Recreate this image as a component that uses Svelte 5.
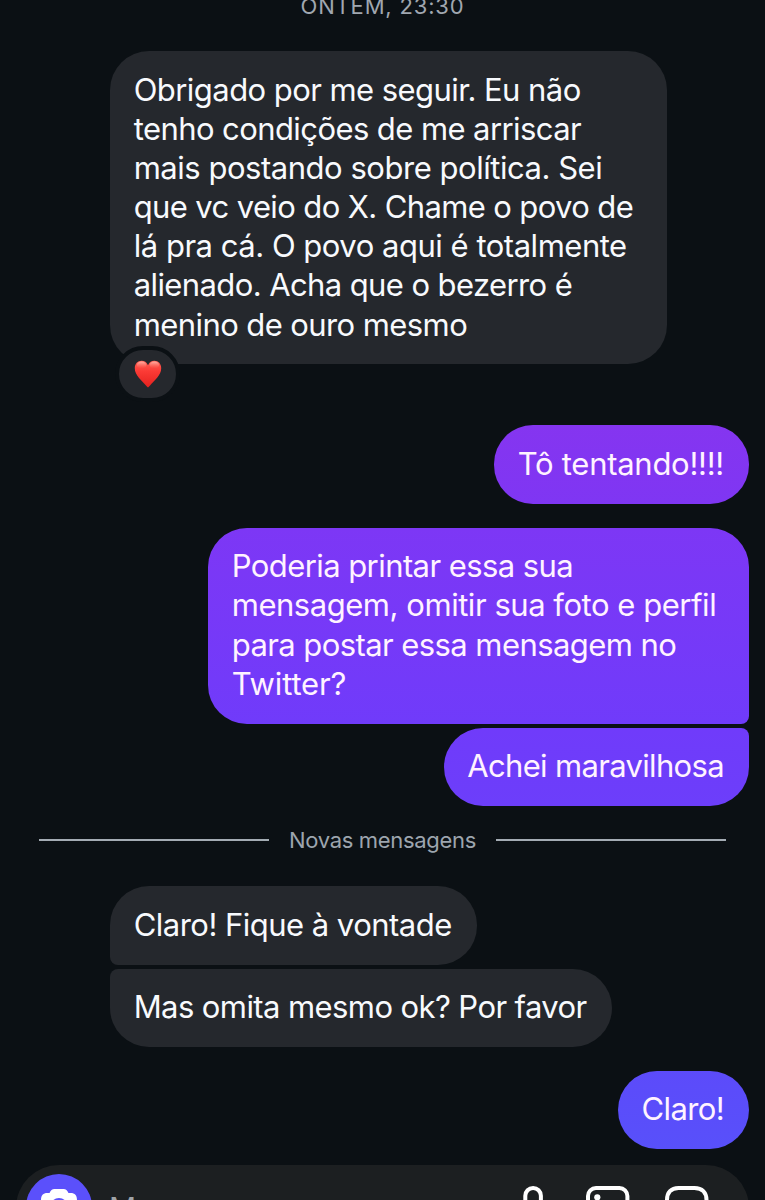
<script>
  const rows = [
    {
      side: 'in', gap: 0, reaction: true,
      lines: [
        ['Obrigado por me seguir. Eu não', 447],
        ['tenho condições de me arriscar', 447.5],
        ['mais postando sobre política. Sei', 468.5],
        ['que vc veio do X. Chame o povo de', 499.5],
        ['lá pra cá. O povo aqui é totalmente', 493],
        ['alienado. Acha que o bezerro é', 438.5],
        ['menino de ouro mesmo', 333.5]
      ]
    },
    { side: 'out', tone: 'violet', gap: 61, lines: [['Tô tentando!!!!', 206.3]] },
    {
      side: 'out', tone: 'purple', join: 'bottom', gap: 24,
      lines: [
        ['Poderia printar essa sua', 341.5],
        ['mensagem, omitir sua foto e perfil', 484.5],
        ['para postar essa mensagem no', 444.5],
        ['Twitter?', 114.5]
      ]
    },
    { side: 'out', tone: 'indigo', join: 'top', gap: 4, lines: [['Achei maravilhosa', 256.8]] },
    { divider: 'Novas mensagens' },
    { side: 'in', join: 'bottom', gap: 0, lines: [['Claro! Fique à vontade', 318]] },
    { side: 'in', join: 'top', gap: 4, lines: [['Mas omita mesmo ok? Por favor', 453]] },
    { side: 'out', tone: 'blue', gap: 24, lines: [['Claro!', 82.5]] }
  ];

  // Spreads the letters of a line so that it takes exactly the given width.
  function track(node, width) {
    const natural = node.getBoundingClientRect().width;
    node.style.letterSpacing = `${(width - natural) / node.textContent.length}px`;
  }
</script>

<main class="chat">
  <div class="date"><span use:track={164}>ONTEM, 23:30</span></div>

  <section class="thread">
    {#each rows as row}
      {#if row.divider}
        <div class="divider"><i></i><span use:track={187}>{row.divider}</span><i></i></div>
      {:else}
        <div class="bubble {row.side} {row.tone ?? ''} {row.join ? 'join-' + row.join : ''}" style="margin-top: {row.gap}px">
          {#each row.lines as [text, width]}
            <div class="line"><span use:track={width}>{text}</span></div>
          {/each}
          {#if row.reaction}
            <div class="reaction">
              <svg width="28" height="28" viewBox="0 0 28 28">
                <defs>
                  <linearGradient id="heart" x1="0" y1="0" x2="0" y2="1">
                    <stop offset="0" stop-color="#ff6256" />
                    <stop offset=".4" stop-color="#fb3a35" />
                    <stop offset="1" stop-color="#e5221f" />
                  </linearGradient>
                  <linearGradient id="shine" x1="0" y1="0" x2="0" y2="1">
                    <stop offset="0" stop-color="#ffc0b4" stop-opacity=".85" />
                    <stop offset="1" stop-color="#ff7468" stop-opacity="0" />
                  </linearGradient>
                </defs>
                <path fill="url(#heart)" d="M14 5.2C12.7 2.2 10.5.8 7.6.8 3.6.8.8 3.9.8 8.2c0 7.3 7 12.2 11.4 17.5.7.9 1.2 1.5 1.8 1.5s1.100-.6 1.800-1.500C20.200 20.400 27.200 15.500 27.200 8.200c0-4.300-2.800-7.400-6.800-7.400-2.900 0-5.100 1.400-6.400 4.400Z" />
                <ellipse cx="7.600" cy="5" rx="4.800" ry="3.500" fill="url(#shine)" />
                <ellipse cx="20.400" cy="5" rx="4.800" ry="3.500" fill="url(#shine)" />
              </svg>
            </div>
          {/if}
        </div>
      {/if}
    {/each}
  </section>

  <footer class="composer">
    <div class="camera">
      <svg width="66" height="66" viewBox="0 0 66 66">
        <path fill="#fff" d="M21.500 19h2c1.300-2.500 2.500-4 5-4h9c2.500 0 3.700 1.500 5 4h2c4.500 0 6.500 2.500 6.500 7v16c0 4.500-2.500 7-7 7H22c-4.500 0-7-2.500-7-7V26c0-4.500 2-7 6.500-7Z" />
        <circle cx="33" cy="33" r="7" fill="none" stroke="#5b50fb" stroke-width="4" />
      </svg>
    </div>
    <span class="placeholder">Mensagem...</span>
    <div class="tools">
      <svg width="40" height="44" viewBox="0 0 40 44">
        <rect x="14.300" y="2" width="15.600" height="25" rx="7.800" />
        <path d="M6.100 20c0 9 7 15 16 15s16-6 16-15M22.100 35v7" />
      </svg>
      <svg width="44" height="44" viewBox="0 0 44 44">
        <rect x="2" y="2" width="39.400" height="39.400" rx="8" />
        <circle class="dot" cx="11.300" cy="11.300" r="3.100" />
        <path d="m3 34 11-10 9 8 8-13 10 12" />
      </svg>
      <svg width="44" height="44" viewBox="0 0 44 44">
        <path d="M13.500 2h16c7.500 0 12 4.500 12 12v13L27 41.500H13.500C6 41.500 2 37 2 29.500V14C2 6.500 6 2 13.500 2ZM41 27h-7c-5 0-7 3-7 7v7" />
      </svg>
    </div>
  </footer>
</main>

<style>
  :global(body) {
    background: #0b1014;
    overflow: hidden;
  }
  .chat {
    box-sizing: border-box;
    width: 765px;
    height: 1200px;
    overflow: hidden;
    display: flex;
    flex-direction: column;
    background: #0b1014;
    font-family: Inter, 'Liberation Sans', sans-serif;
  }
  span {
    white-space: nowrap;
  }
  .date {
    flex: none;
    height: 51px;
    margin-top: -7px;
    margin-bottom: 7px;
    text-align: center;
    font-size: 22px;
    line-height: 27px;
    color: #a0a7b0;
  }
  .thread {
    flex: none;
    display: flex;
    flex-direction: column;
    padding: 0 16px 0 110px;
  }
  .bubble {
    box-sizing: border-box;
    position: relative;
    padding: 18.500px 25px 20.600px 23.700px;
    border-radius: 39px;
    font-size: 31px;
    color: #f8fafd;
  }
  .line {
    height: 39.200px;
    line-height: 39.200px;
  }
  .in {
    align-self: flex-start;
    background: #25282d;
  }
  .in:first-child {
    width: 557px;
    margin-top: 0;
  }
  .out {
    align-self: flex-end;
    color: #fff3ff;
  }
  .violet { background: linear-gradient(#8535f0, #7f36f3); }
  .purple { width: 541px; background: linear-gradient(#7d37f5, #703bfa); }
  .indigo { background: linear-gradient(#703bfa, #6c3efa); }
  .blue { background: linear-gradient(#5c4bfa, #5850fa); }
  .in.join-bottom { border-bottom-left-radius: 8px; }
  .in.join-top { border-top-left-radius: 8px; }
  .out.join-bottom { border-bottom-right-radius: 8px; }
  .out.join-top { border-top-right-radius: 8px; }

  .reaction {
    position: absolute;
    left: 5.400px;
    bottom: -38px;
    width: 57px;
    height: 48px;
    border: 4px solid #0b1014;
    border-radius: 28px;
    background: #25282d;
    display: flex;
    align-items: center;
    justify-content: center;
  }
  .divider {
    display: flex;
    align-items: center;
    gap: 20px;
    height: 26px;
    margin: 21px 23px 33.500px -71px;
    font-size: 22px;
    line-height: 26px;
    color: #9da5ae;
  }
  .divider i {
    flex: 1;
    height: 2px;
    background: #a4acb4;
  }
  .composer {
    box-sizing: border-box;
    flex: none;
    display: flex;
    align-items: flex-start;
    height: 86px;
    margin: 16px 16px 0;
    padding: 9px 40px 0 10px;
    border-radius: 43px;
    background: #1c1f21;
  }
  .camera {
    width: 66px;
    height: 66px;
    border-radius: 50%;
    background: #5b50fb;
  }
  .placeholder {
    margin: 15px 0 0 17px;
    font-size: 30px;
    line-height: 39px;
    color: #a0a4a8;
  }
  .tools {
    display: flex;
    gap: 35px;
    margin: 12px 0 0 auto;
  }
  .tools svg {
    fill: none;
    stroke: #fff;
    stroke-width: 4;
    stroke-linejoin: round;
    stroke-linecap: round;
  }
  .tools .dot {
    fill: #fff;
    stroke: none;
  }
</style>
